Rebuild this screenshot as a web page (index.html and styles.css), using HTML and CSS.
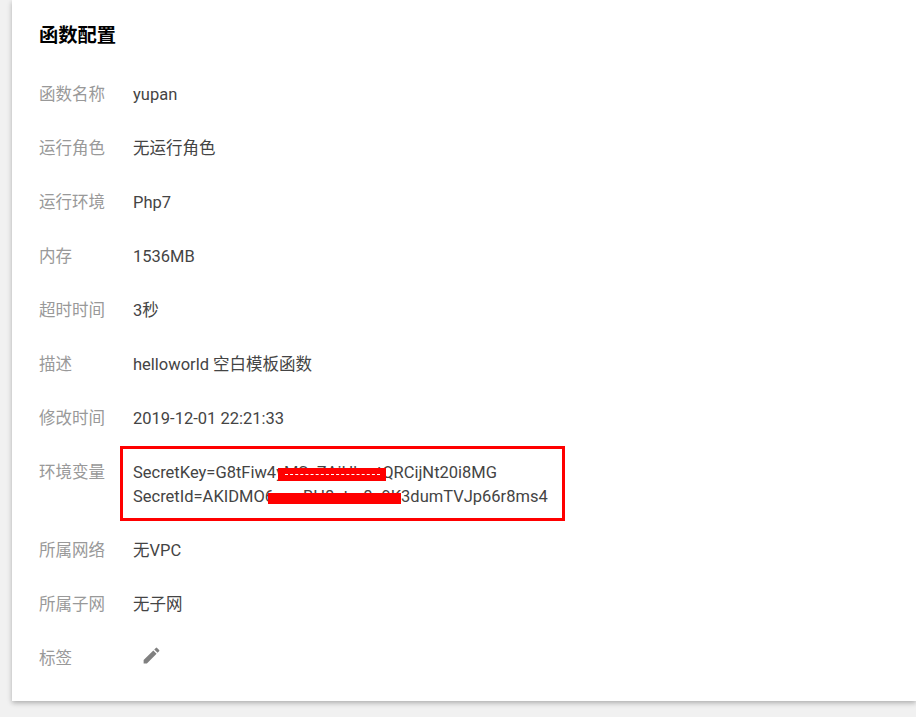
FILE: index.html
```html
<!DOCTYPE html>
<html lang="zh-CN">
<head>
<meta charset="utf-8">
<title>函数配置</title>
<link rel="stylesheet" href="styles.css">
</head>
<body>
<main class="card">
  <h2 class="title">函数配置</h2>
  <dl class="config">
    <div class="row"><dt>函数名称</dt><dd>yupan</dd></div>
    <div class="row"><dt>运行角色</dt><dd>无运行角色</dd></div>
    <div class="row"><dt>运行环境</dt><dd>Php7</dd></div>
    <div class="row"><dt>内存</dt><dd>1536MB</dd></div>
    <div class="row"><dt>超时时间</dt><dd>3秒</dd></div>
    <div class="row"><dt>描述</dt><dd>helloworld 空白模板函数</dd></div>
    <div class="row"><dt>修改时间</dt><dd>2019-12-01 22:21:33</dd></div>
    <div class="row env">
      <dt>环境变量</dt>
      <dd>
        <div class="secret">SecretKey=G8tFiw4yMSsZAiHhmtQRCijNt20i8MG<span class="redact redact-key"></span></div>
        <div class="secret">SecretId=AKIDMO6mmBH8atm8a9K3dumTVJp66r8ms4<span class="redact redact-id"></span></div>
      </dd>
      <span class="highlight"></span>
    </div>
    <div class="row"><dt>所属网络</dt><dd>无VPC</dd></div>
    <div class="row"><dt>所属子网</dt><dd>无子网</dd></div>
    <div class="row"><dt>标签</dt><dd class="tag-value">
      <svg class="pencil" viewBox="0 0 24 24" width="21" height="21"><path d="M3 17.25V21h3.75L17.81 9.94l-3.75-3.75L3 17.25zM20.71 7.04a1 1 0 0 0 0-1.41l-2.34-2.34a1 1 0 0 0-1.41 0l-1.83 1.83 3.75 3.75 1.83-1.83z"/></svg>
    </dd></div>
  </dl>
</main>
</body>
</html>
```
FILE: styles.css
```css
* { box-sizing: border-box; }
html, body { margin: 0; padding: 0; }
body {
  background: #f1f1f1;
  height: 717px;
  overflow: hidden;
  padding-left: 12px;
  font-family: Roboto, "Noto Sans CJK SC", sans-serif;
  font-size: 16.5px;
  line-height: 24px;
}
.card {
  background: #fff;
  height: 701px;
  padding: 23px 27px 0;
  box-shadow: 0 2px 5px rgba(0, 0, 0, 0.28);
}
.title {
  margin: 0;
  font-size: 19.3px;
  line-height: 26px;
  font-weight: 700;
  color: #000;
}
.config { margin: 19px 0 0; }
.row {
  position: relative;
  display: flex;
  padding: 15px 0;
}
dt { width: 94px; flex: none; color: #999; }
dd { margin: 0; color: #444; }
.secret { position: relative; white-space: nowrap; }
.redact { position: absolute; background: #f00; }
.redact-key { left: 145px; top: 7px; width: 108px; height: 13px; }
.redact-key::after {
  content: "";
  position: absolute;
  left: 7px;
  right: 6px;
  top: 6px;
  border-top: 1px dashed #fff;
}
.redact-id { left: 135px; top: 8px; width: 133px; height: 11px; }
.highlight {
  position: absolute;
  left: 81px;
  top: 0;
  width: 445px;
  height: 75px;
  border: 3px solid #f00;
}
.tag-value { display: flex; }
.pencil { fill: #808080; margin: -2px 0 0 8px; display: block; }
```
